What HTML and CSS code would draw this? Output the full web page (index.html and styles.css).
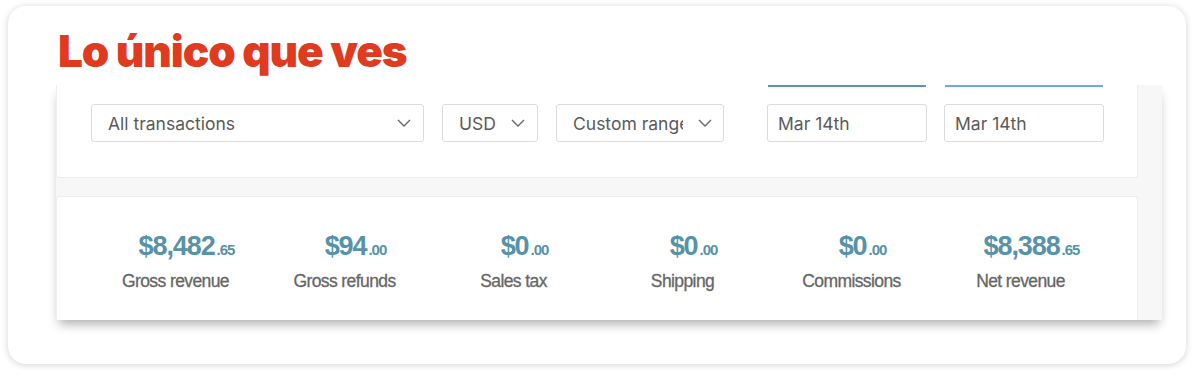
FILE: index.html
```html
<!DOCTYPE html>
<html lang="es">
<head>
  <meta charset="UTF-8">
  <title>Lo único que ves</title>
  <link rel="stylesheet" href="styles.css">
</head>
<body>
  <div class='card'>
    <h1 class='title'>Lo único que ves</h1>
    <div class='shot'>
      <div class='panel filters'>
        <div class='select wide'><span>All transactions</span><svg class='chev' viewBox='0 0 14 8'><path d='M1 1l6 6 6-6'/></svg></div>
        <div class='select currency'><span>USD</span><svg class='chev' viewBox='0 0 14 8'><path d='M1 1l6 6 6-6'/></svg></div>
        <div class='select range'><span>Custom range</span><svg class='chev' viewBox='0 0 14 8'><path d='M1 1l6 6 6-6'/></svg></div>
        <div class='dates'>
          <div class='date'>
            <div class='bar teal'></div>
            <div class='input'>Mar 14th</div>
          </div>
          <div class='date'>
            <div class='bar sky'></div>
            <div class='input'>Mar 14th</div>
          </div>
        </div>
      </div>
      <div class='panel stats'>
        <div class='stat'><div class='value'>$8,482<small>.65</small></div><div class='label'>Gross revenue</div></div>
        <div class='stat'><div class='value'>$94<small>.00</small></div><div class='label'>Gross refunds</div></div>
        <div class='stat'><div class='value'>$0<small>.00</small></div><div class='label'>Sales tax</div></div>
        <div class='stat'><div class='value'>$0<small>.00</small></div><div class='label'>Shipping</div></div>
        <div class='stat'><div class='value'>$0<small>.00</small></div><div class='label'>Commissions</div></div>
        <div class='stat'><div class='value'>$8,388<small>.65</small></div><div class='label'>Net revenue</div></div>
      </div>
    </div>
  </div>
</body>
</html>
```
FILE: styles.css
```css
body { margin: 0; padding: 6px 8px; background: #fff; font-family: Inter, "Liberation Sans", sans-serif; }
.card { width: 1178px; height: 358px; box-sizing: border-box; background: #fff; border-radius: 18px; box-shadow: 0 1px 7px rgba(0,0,0,0.18); overflow: hidden; }
.title { margin: 0; padding: 23px 0 0 50px; height: 55px; box-sizing: border-box; font-size: 44px; line-height: 44px; font-weight: 900; letter-spacing: -1.1px; color: #e03a1f; }
.shot { margin: 24px 0 0 48px; width: 1106px; height: 235px; background: #f7f7f7; box-shadow: 0 7px 10px -3px rgba(0,0,0,0.32); }
.panel { width: 1082px; box-sizing: border-box; background: #fff; border: 1px solid #ececec; border-radius: 3px; }
.filters { height: 93px; border-top: none; border-radius: 0 0 3px 3px; display: flex; padding: 0 0 0 34px; gap: 18px; }
.select { margin-top: 19px; height: 38px; box-sizing: border-box; border: 1px solid #dcdcdc; border-radius: 3px; display: flex; align-items: center; padding: 0 6px 0 16px; gap: 6px; font-size: 17.5px; color: #5a5a5a; }
.select span { flex: 1; white-space: nowrap; overflow: hidden; }
.wide { width: 333px; }
.currency { width: 96px; }
.range { width: 168px; gap: 15px; }
.chev { width: 14px; height: 8px; margin-right: 6px; fill: none; stroke: #666; stroke-width: 1.4; flex: none; }
.range .chev { margin-right: 5px; }
.dates { display: flex; gap: 17px; margin-left: 25px; }
.date { width: 160px; }
.bar { height: 2px; margin: 0 1px; }
.teal { background: #5a97a6; }
.sky { background: #68abe6; }
.input { margin-top: 17px; height: 38px; box-sizing: border-box; border: 1px solid #dcdcdc; border-radius: 3px; padding: 0 10px; display: flex; align-items: center; font-size: 17.5px; color: #5a5a5a; }
.stats { margin-top: 18px; height: 124px; border-bottom: none; border-radius: 3px 3px 0 0; display: flex; padding: 35px 0 0 34px; }
.stat { width: 169px; display: flex; flex-direction: column; align-items: center; }
.value { padding-left: 22px; font-family: "Liberation Sans", Arial, sans-serif; font-size: 27px; line-height: 29px; font-weight: bold; letter-spacing: -1.1px; color: #5692a8; }
.value small { font-size: 15px; font-weight: bold; letter-spacing: -1px; margin-left: 2px; }
.label { margin-top: 7px; font-family: "Liberation Sans", Arial, sans-serif; font-size: 17.5px; letter-spacing: -0.6px; color: #666; -webkit-text-stroke: 0.3px #666; }
```
